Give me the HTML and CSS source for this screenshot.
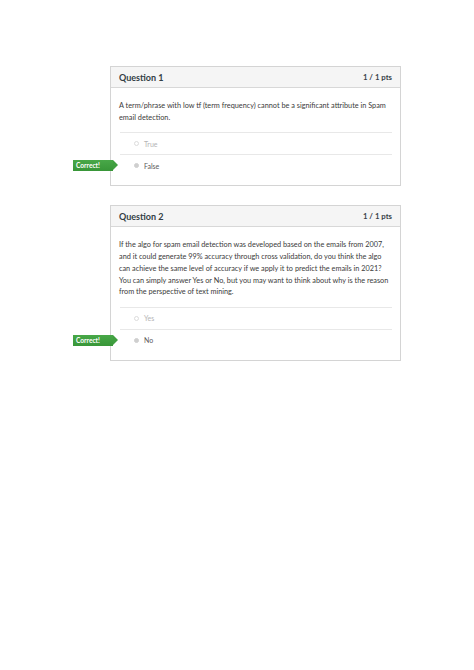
FILE: index.html
```html
<!DOCTYPE html>
<html>
<head>
<meta charset="utf-8">
<link rel="stylesheet" href="styles.css">
</head>
<body>
<div class="page">
  <div class="card">
    <div class="card-header">
      <span class="q-title">Question 1</span>
      <span class="q-pts">1 / 1 pts</span>
    </div>
    <div class="card-body">
      <p class="q-text">A term/phrase with low tf (term frequency) cannot be a significant attribute in Spam email detection.</p>
      <div class="answers">
        <div class="answer">
          <span class="radio"></span><span class="a-label">True</span>
        </div>
        <div class="answer selected">
          <span class="badge">Correct!</span>
          <span class="radio"></span><span class="a-label">False</span>
        </div>
      </div>
    </div>
  </div>

  <div class="card">
    <div class="card-header">
      <span class="q-title">Question 2</span>
      <span class="q-pts">1 / 1 pts</span>
    </div>
    <div class="card-body">
      <p class="q-text">If the algo for spam email detection was developed based on the emails from 2007, and it could generate 99% accuracy through cross validation, do you think the algo can achieve the same level of accuracy if we apply it to predict the emails in 2021? You can simply answer Yes or No, but you may want to think about why is the reason from the perspective of text mining.</p>
      <div class="answers">
        <div class="answer">
          <span class="radio"></span><span class="a-label">Yes</span>
        </div>
        <div class="answer selected">
          <span class="badge">Correct!</span>
          <span class="radio"></span><span class="a-label">No</span>
        </div>
      </div>
    </div>
  </div>
</div>
</body>
</html>
```

FILE: styles.css
```css
html, body {
  margin: 0;
  padding: 0;
  background: #ffffff;
}

body {
  font-family: Lato, "Liberation Sans", sans-serif;
  color: #3a3a3a;
}

.page {
  padding: 66px 0 0 110px;
  display: flex;
  flex-direction: column;
  gap: 19px;
}

.card {
  width: 289px;
  border: 1px solid #d4d4d4;
  background: #fff;
}

.card-header {
  height: 20px;
  background: #f5f5f5;
  border-bottom: 1px solid #d8d8d8;
  display: flex;
  align-items: center;
  justify-content: space-between;
  padding: 0 8px 0 8px;
}

.q-title {
  font-size: 9px;
  font-weight: 700;
  color: #333d44;
}

.q-pts {
  font-size: 7.8px;
  color: #3a434a;
  font-weight: 700;
}

.card-body {
  padding: 12px 8px 9px 8px;
}

.q-text {
  margin: 0 0 9px 0;
  font-size: 7.3px;
  line-height: 11.7px;
  color: #3b3b3b;
}

.answers {
  display: flex;
  flex-direction: column;
  margin-left: 1px;
}

.answer {
  position: relative;
  height: 21px;
  border-top: 1px solid #e8e8e8;
  display: flex;
  align-items: center;
  padding-left: 14px;
  font-size: 7px;
}

.radio {
  width: 3px;
  height: 3px;
  border: 1px solid #dcdcdc;
  border-radius: 50%;
  margin-right: 5px;
  background: #fff;
}

.a-label {
  color: #b4b4b4;
}

.selected .radio {
  background: #cfcfcf;
  border-color: #cfcfcf;
}

.selected .a-label {
  color: #5a5a5a;
}

.badge {
  position: absolute;
  left: -47px;
  top: 5px;
  height: 11px;
  width: 40px;
  background: linear-gradient(#48a848, #389638);
  color: #fff;
  font-size: 6.6px;
  font-weight: 700;
  line-height: 11px;
  padding-left: 3px;
  box-sizing: border-box;
}

.badge::after {
  content: "";
  position: absolute;
  right: -5px;
  top: 0;
  border-top: 5.5px solid transparent;
  border-bottom: 5.5px solid transparent;
  border-left: 5px solid #409f40;
}
```
